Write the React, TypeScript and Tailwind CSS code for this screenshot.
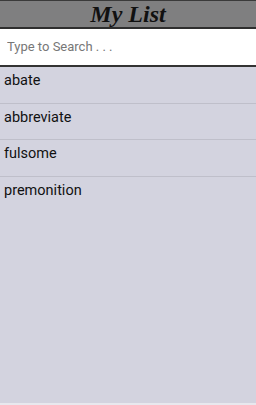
import React, { useState } from "react";

const words = ["abate", "abbreviate", "fulsome", "premonition"];

export default function App() {
  const [query, setQuery] = useState("");
  const shown = words.filter((w) => w.toLowerCase().includes(query.toLowerCase()));

  return (
    <div className="h-[405px] w-[256px] flex flex-col bg-[#d3d3df] font-['Roboto',sans-serif]">
      <div className="h-[29px] shrink-0 flex items-center justify-center bg-[#7f7f80] border-t border-t-[#3a3a3a] border-b-2 border-b-[#2e2e2e]">
        <h1 className="text-[24px] leading-none font-bold italic text-[#111] font-['Liberation_Serif',serif]">
          My List
        </h1>
      </div>
      <div className="h-[38px] shrink-0 bg-white border-b-2 border-b-[#333] flex items-center">
        <input
          value={query}
          onChange={(e) => setQuery(e.target.value)}
          placeholder="Type to Search . . ."
          className="w-full px-[7px] text-[13px] text-[#222] placeholder:text-[#777] outline-none bg-transparent"
        />
      </div>
      <ul className="flex-1 flex flex-col">
        {shown.map((w) => (
          <li
            key={w}
            className="h-[36.5px] shrink-0 pt-[5px] px-[4px] text-[14.5px] leading-[17px] text-[#111] border-b border-b-[#bfbfca] last:border-b-0"
          >
            {w}
          </li>
        ))}
      </ul>
      <div className="h-[2px] shrink-0 bg-[#e8e8ee]" />
    </div>
  );
}
